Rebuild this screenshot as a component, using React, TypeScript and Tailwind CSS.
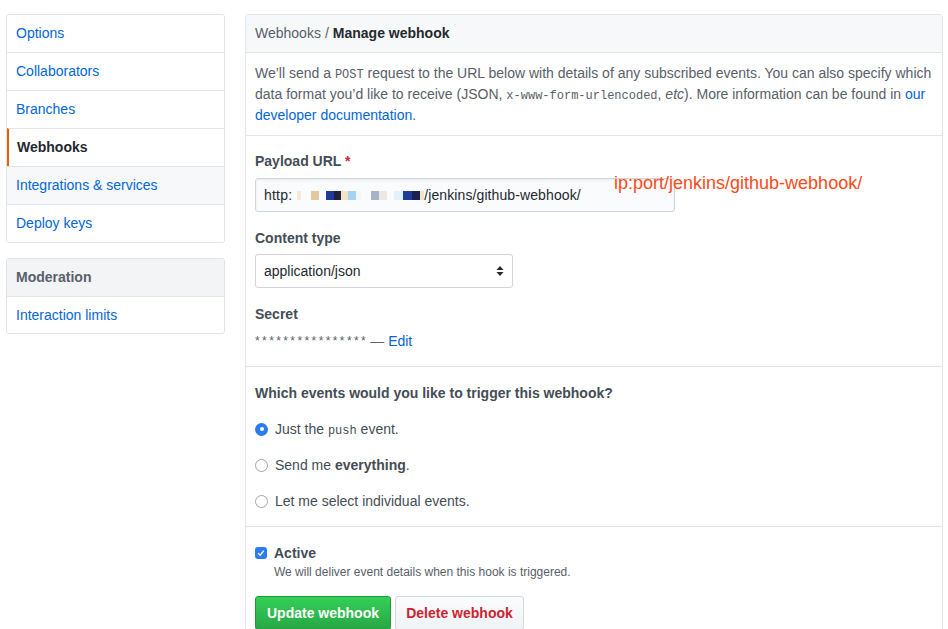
import React from "react";

const navItems = [
  { label: "Options" },
  { label: "Collaborators" },
  { label: "Branches" },
  { label: "Webhooks", selected: true },
  { label: "Integrations & services", hover: true },
  { label: "Deploy keys" },
];

const pixels: { w: number; c: string }[] = [
  { w: 5, c: "transparent" },
  { w: 4, c: "#f6ecd4" },
  { w: 10, c: "transparent" },
  { w: 8, c: "#e2c79f" },
  { w: 7, c: "transparent" },
  { w: 8, c: "#1f3d96" },
  { w: 7, c: "#22223d" },
  { w: 7, c: "#f2e3c4" },
  { w: 8, c: "#a3d2f2" },
  { w: 5, c: "#f4f6f8" },
  { w: 10, c: "transparent" },
  { w: 8, c: "#a9b2c9" },
  { w: 8, c: "#ede8e3" },
  { w: 7, c: "transparent" },
  { w: 9, c: "#e2f2fa" },
  { w: 9, c: "#1f3d96" },
  { w: 8, c: "#1d2152" },
  { w: 4, c: "#f3e5c6" },
];

const mono = "font-['Liberation_Mono',monospace] text-[12px] leading-[1]";

export default function App() {
  return (
    <div className="min-h-[629px] bg-white font-['Liberation_Sans',Arial,sans-serif] text-[14px] text-[#24292e] relative overflow-hidden">
      <div className="flex items-start gap-[20px] pl-[6px] pr-[5px] pt-[14px]">
        {/* Sidebar */}
        <div className="w-[219px] shrink-0 flex flex-col gap-[15px]">
          <nav className="border border-[#e1e4e8] rounded-[3px] overflow-hidden">
            {navItems.map((it, i) => (
              <div
                key={it.label}
                className={
                  "flex items-center " +
                  (i > 0 ? "h-[38px] border-t border-[#e1e4e8] " : "h-[37px] ") +
                  (it.selected
                    ? "border-l-2 border-l-[#e36209] pl-[8px] font-bold text-[#24292e] "
                    : "pl-[9px] text-[#0366d6] ") +
                  (it.hover ? "bg-[#f6f8fa]" : "bg-white")
                }
              >
                {it.label}
              </div>
            ))}
          </nav>
          <nav className="border border-[#e1e4e8] rounded-[3px] overflow-hidden">
            <div className="h-[37px] flex items-center pl-[9px] bg-[#f3f4f6] font-bold text-[#586069]">
              Moderation
            </div>
            <div className="h-[37px] flex items-center pl-[9px] border-t border-[#e1e4e8] text-[#0366d6]">
              Interaction limits
            </div>
          </nav>
        </div>

        {/* Main */}
        <div className="w-[698px] shrink-0 border border-[#e1e4e8] rounded-t-[3px] min-h-[640px]">
          <div className="h-[38px] flex items-center px-[9px] bg-[#f6f8fa] border-b border-[#e1e4e8]">
            <span className="text-[#586069]">Webhooks</span>
            <span className="text-[#586069] mx-[4px]">/</span>
            <span className="font-bold">Manage webhook</span>
          </div>

          <div className="px-[9px] pt-[10px] pb-[9px] leading-[21px] text-[#586069]">
            We’ll send a <code className={mono}>POST</code> request to the URL below with details of any
            subscribed events. You can also specify which data format you’d like to receive (JSON,{" "}
            <code className={mono}>x-www-form-urlencoded</code>, <em>etc</em>). More information can be
            found in <span className="text-[#0366d6]">our developer documentation</span>.
          </div>

          <div className="border-t border-[#e1e4e8] px-[9px] pt-[15px] pb-[15px] flex flex-col">
            <label className="font-bold leading-[20px] text-[#444d56]">
              Payload URL <span className="text-[#cb2431]">*</span>
            </label>
            <div className="mt-[7px] w-[420px] h-[34px] border border-[#d1d5da] rounded-[3px] bg-[#fafbfc] flex items-center pl-[8px] shadow-[inset_0_1px_2px_rgba(27,31,35,0.075)]">
              <span className="tracking-[0.2px]">http:</span>
              <span className="flex items-center h-[10px]">
                {pixels.map((p, i) => (
                  <span key={i} className="inline-block h-[9px]" style={{ width: p.w, background: p.c }} />
                ))}
              </span>
              <span className="tracking-[0.1px]">/jenkins/github-webhook/</span>
            </div>

            <label className="mt-[16px] font-bold leading-[20px] text-[#444d56]">Content type</label>
            <div className="mt-[6px] w-[258px] h-[34px] border border-[#d1d5da] rounded-[3px] bg-white flex items-center justify-between pl-[8px] pr-[8px]">
              <span>application/json</span>
              <svg width="8" height="12" viewBox="0 0 8 12">
                <path d="M4 1 L7.5 5 H0.5 Z" fill="#24292e" />
                <path d="M4 11 L7.5 7 H0.5 Z" fill="#24292e" />
              </svg>
            </div>

            <label className="mt-[16px] font-bold leading-[20px] text-[#444d56]">Secret</label>
            <div className="mt-[7px] h-[20px] flex items-center text-[#586069]">
              <span className="text-[12px] tracking-[2.4px] leading-[1]">****************</span>
              <span className="ml-[2px]">—</span>
              <span className="ml-[4px] text-[#0366d6]">Edit</span>
            </div>
          </div>

          <div className="border-t border-[#e1e4e8] px-[9px] pt-[16px] pb-[15px] flex flex-col gap-[16px]">
            <div className="font-bold h-[20px] leading-[20px] text-[#444d56]">
              Which events would you like to trigger this webhook?
            </div>
            <div className="flex items-center h-[20px] gap-[7px] text-[#444d56]">
              <span className="w-[13px] h-[13px] rounded-full bg-[#2b7cf0] flex items-center justify-center">
                <span className="w-[4px] h-[4px] rounded-full bg-white" />
              </span>
              <span className="leading-[20px]">
                Just the <code className={mono}>push</code> event.
              </span>
            </div>
            <div className="flex items-center h-[20px] gap-[7px] text-[#444d56]">
              <span className="w-[13px] h-[13px] rounded-full border border-[#a5a5a5] bg-white" />
              <span className="leading-[20px]">
                Send me <b>everything</b>.
              </span>
            </div>
            <div className="flex items-center h-[20px] gap-[7px] text-[#444d56]">
              <span className="w-[13px] h-[13px] rounded-full border border-[#a5a5a5] bg-white" />
              <span className="leading-[20px]">Let me select individual events.</span>
            </div>
          </div>

          <div className="border-t border-[#e1e4e8] px-[9px] pt-[16px]">
            <div className="flex items-center h-[20px] gap-[7px]">
              <span className="w-[12px] h-[12px] rounded-[3px] bg-[#2b7cf0] flex items-center justify-center">
                <svg width="8" height="8" viewBox="0 0 8 8">
                  <path d="M1.2 4.2 L3.2 6.2 L6.8 1.6" stroke="white" strokeWidth="1.4" fill="none" />
                </svg>
              </span>
              <span className="font-bold text-[#444d56]">Active</span>
            </div>
            <div className="pl-[19px] text-[12px] leading-[18px] text-[#586069]">
              We will deliver event details when this hook is triggered.
            </div>
            <div className="mt-[15px] flex gap-[4px]">
              <button className="h-[34px] w-[136px] rounded-[3px] border border-[#1f9a3a] bg-gradient-to-b from-[#34d058] to-[#28a745] text-white font-bold">
                Update webhook
              </button>
              <button className="h-[34px] w-[129px] rounded-[3px] border border-[#d5d8db] bg-gradient-to-b from-[#fafbfc] to-[#eff3f6] text-[#cb2431] font-bold">
                Delete webhook
              </button>
            </div>
          </div>
        </div>
      </div>

      <div className="absolute left-[614px] top-[172px] text-[18px] leading-[22px] text-[#fc4a1a]">
        ip:port/jenkins/github-webhook/
      </div>
    </div>
  );
}
